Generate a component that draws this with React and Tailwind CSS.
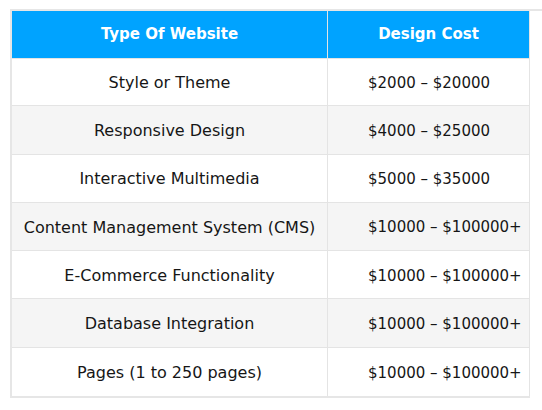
const rows = [
  ["Style or Theme", "$2000 – $20000"],
  ["Responsive Design", "$4000 – $25000"],
  ["Interactive Multimedia", "$5000 – $35000"],
  ["Content Management System (CMS)", "$10000 – $100000+"],
  ["E-Commerce Functionality", "$10000 – $100000+"],
  ["Database Integration", "$10000 – $100000+"],
  ["Pages (1 to 250 pages)", "$10000 – $100000+"],
];

export default function App() {
  return (
    <div className="bg-white min-h-[410px] pl-[10px] pt-[9px] font-['DejaVu_Sans',sans-serif]">
      <div className="border-t-2 border-l-2 border-[#e6e6e6]">
        <table className="table-fixed border-separate border-spacing-0 w-[518px] border-b-2 border-[#e6e6e6]">
          <thead>
            <tr className="h-[47px] bg-[#00a3ff] text-white text-[15px] font-bold">
              <th className="w-[316px] border-r border-[#e4e4e4] px-[10px] text-center">Type Of Website</th>
              <th className="w-[202px] border-r border-[#e4e4e4] px-[40px] text-center whitespace-nowrap">Design Cost</th>
            </tr>
          </thead>
          <tbody>
            {rows.map(([type, cost], i) => (
              <tr key={type} className={`h-[48.3px] text-[#161616] ${i % 2 ? "bg-[#f5f5f5]" : "bg-white"}`}>
                <td className={`border-r border-[#e4e4e4] px-[6px] pt-[2px] text-center text-[16px] whitespace-nowrap ${i < rows.length - 1 ? "border-b" : ""} ${i === 0 ? "border-t" : ""}`}>
                  {type}
                </td>
                <td className={`border-r border-[#e4e4e4] px-[40px] pt-[2px] text-center text-[15px] whitespace-nowrap ${i < rows.length - 1 ? "border-b" : ""} ${i === 0 ? "border-t" : ""}`}>
                  {cost}
                </td>
              </tr>
            ))}
          </tbody>
        </table>
      </div>
    </div>
  );
}
